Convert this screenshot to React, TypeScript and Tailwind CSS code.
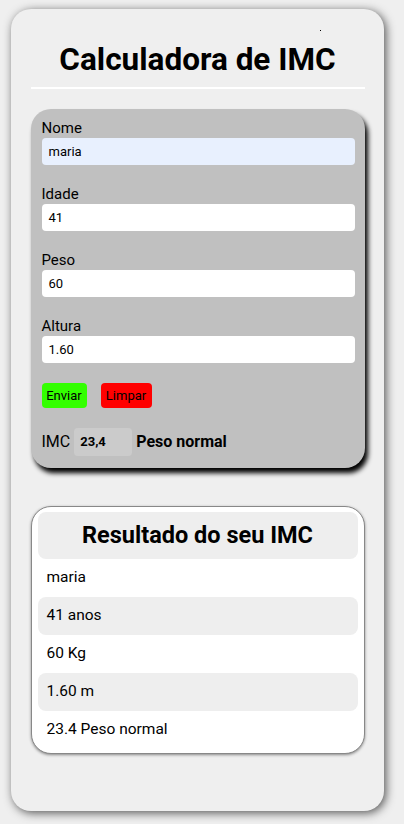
import React from "react";

function Field({ label, value, autofill }: { label: string; value: string; autofill?: boolean }) {
  return (
    <div className="flex flex-col">
      <label className="text-[15px] leading-[18px] text-black">{label}</label>
      <div
        className={`mt-[1px] h-[27px] rounded-[4px] flex items-center px-[7px] text-[13px] text-black ${
          autofill ? "bg-[#e8f0fe]" : "bg-white"
        }`}
      >
        {value}
      </div>
    </div>
  );
}

export default function App() {
  const rows = ["maria", "41 anos", "60 Kg", "1.60 m", "23.4 Peso normal"];
  return (
    <div className="w-full min-h-screen bg-[#efefef] pt-[9px] pl-[11px]" style={{ fontFamily: "Roboto, 'Noto Sans', sans-serif" }}>
      <div className="relative w-[373px] h-[802px] rounded-[20px] bg-[#efefef] shadow-[2px_2px_10px_#555] flex flex-col items-center">
        <div className="absolute left-[309px] top-[21px] w-[1px] h-[1px] bg-black" />
        <h1 className="mt-[32px] text-[31.5px] leading-[37px] font-bold text-black">Calculadora de IMC</h1>
        <div className="mt-[9px] w-[334px] h-[2px] bg-white" />
        <div className="mt-[20px] w-[334px] rounded-[20px] bg-[#c0c0c0] shadow-[3px_5px_5px_#000] pt-[10px] pl-[11px] pr-[10px] pb-[12px] flex flex-col gap-[20px]">
          <Field label="Nome" value="maria" autofill />
          <Field label="Idade" value="41" />
          <Field label="Peso" value="60" />
          <Field label="Altura" value="1.60" />
          <div className="flex gap-[14px]">
            <button className="h-[25px] w-[45px] rounded-[4px] bg-[#33ff00] text-[13px] text-black flex items-center justify-center">Enviar</button>
            <button className="h-[25px] w-[51px] rounded-[4px] bg-[#ff0000] text-[13px] text-black flex items-center justify-center">Limpar</button>
          </div>
          <div className="flex items-center h-[28px]">
            <span className="text-[16px] text-black">IMC</span>
            <div className="ml-[4px] h-[28px] w-[58px] rounded-[4px] bg-[#cbcbcb] flex items-center px-[6px] text-[13px] font-bold text-black">23,4</div>
            <span className="ml-[4px] text-[16px] font-bold text-black">Peso normal</span>
          </div>
        </div>
        <div className="mt-[38px] w-[334px] rounded-[20px] bg-white border border-[#888] shadow-[0_1px_3px_#888] px-[6px] pt-[5px] pb-[4px] flex flex-col">
          <div className="h-[47px] rounded-[8px] bg-[#eeeeee] flex items-center justify-center text-[23.5px] font-bold text-black">
            Resultado do seu IMC
          </div>
          {rows.map((r, i) => (
            <div
              key={r}
              className={`h-[38px] rounded-[8px] flex items-center px-[9px] text-[15.5px] text-black ${
                i % 2 === 1 ? "bg-[#eeeeee]" : "bg-white"
              }`}
            >
              {r}
            </div>
          ))}
        </div>
      </div>
    </div>
  );
}
